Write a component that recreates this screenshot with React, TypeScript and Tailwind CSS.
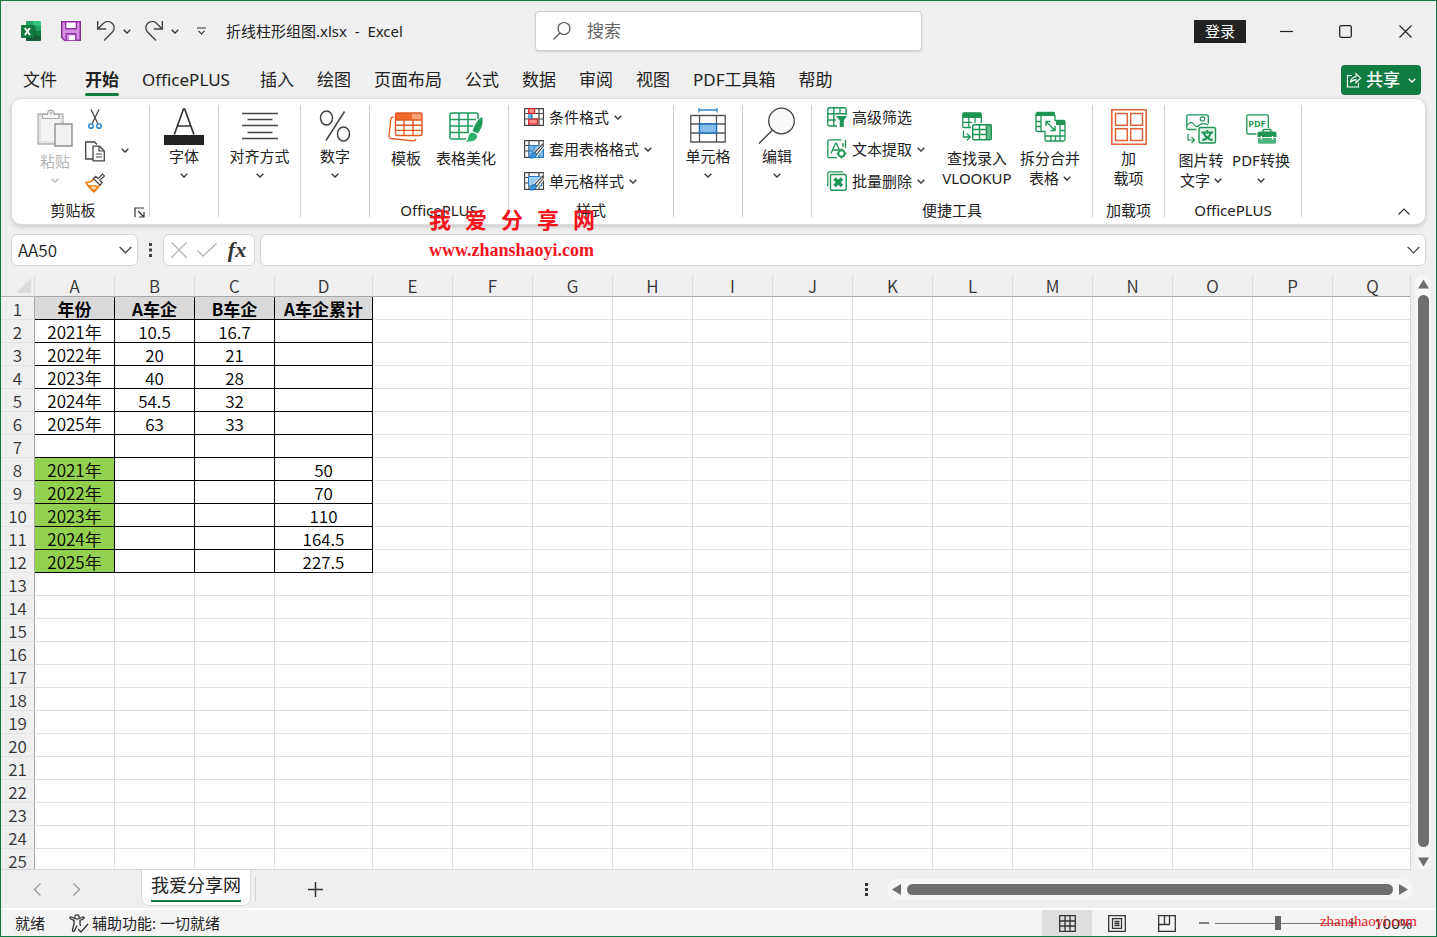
import React from "react";

type Kids = { children?: React.ReactNode };

const UI = "font-['Noto_Sans','Noto_Sans_CJK_SC',sans-serif]";
const CELL = "font-['Noto_Sans_CJK_SC',sans-serif]";

function Icon({ w, h, children, className = "" }: Kids & { w: number; h: number; className?: string }) {
  return (
    <svg width={w} height={h} viewBox={`0 0 ${w} ${h}`} fill="none" aria-hidden="true" className={`shrink-0 ${className}`}>
      {children}
    </svg>
  );
}

function Chevron({ className = "text-[#333]" }: { className?: string }) {
  return (
    <Icon w={8} h={5} className={className}>
      <path d="M.700.800 4 4 7.300.800" stroke="currentColor" strokeWidth="1.300" />
    </Icon>
  );
}

/* ---------- title bar icons ---------- */

const ExcelLogo = () => (
  <Icon w={20} h={20}>
    <path d="M6 0h7v5H5V1a1 1 0 0 1 1-1z" fill="#21a366" />
    <path d="M12 0h7a1 1 0 0 1 1 1v4h-8z" fill="#33c481" />
    <path d="M5 5h8v5H5z" fill="#107c41" />
    <path d="M12 5h8v5h-8z" fill="#21a366" />
    <path d="M5 10h8v5H5z" fill="#107c41" />
    <path d="M12 10h8v5h-8z" fill="#107c41" />
    <path d="M5 15h15v4a1 1 0 0 1-1 1H6a1 1 0 0 1-1-1z" fill="#185c37" />
    <path d="M5 4h8.500a1 1 0 0 1 1 1v12a1 1 0 0 1-1 1H5z" fill="#0b4a28" opacity=".5" />
    <rect y="4" width="13" height="13" rx="1" fill="#107c41" />
    <path d="m3.800 7 5.200 7M9 7l-5.200 7" stroke="#fff" strokeWidth="1.900" />
  </Icon>
);

const SaveIcon = () => (
  <Icon w={20} h={20}>
    <path d="M.75.75h18.500v18.500H3.500L.75 16.500z" fill="#d58fe0" stroke="#8f2da0" strokeWidth="1.500" />
    <path d="M4.700.75h10.600v7H4.700z" fill="#fff" stroke="#8f2da0" strokeWidth="1.300" />
    <path d="M5.200 19.250v-6.500h9.600v6.500" fill="#d58fe0" stroke="#8f2da0" strokeWidth="1.300" />
    <path d="M8 14.500h6v4.500H8z" fill="#fff" />
  </Icon>
);

const UndoIcon = () => (
  <Icon w={20} h={20}>
    <path d="M1.700 0v8h8.500M2 7.700 7.800 2C10.500-.2 14 .2 16.400 2.600c2.400 2.400 2.400 6 0 8.400L8 19.500" stroke="#444" strokeWidth="1.400" />
  </Icon>
);

const RedoIcon = () => (
  <Icon w={20} h={20}>
    <path d="M18.300 0v8H9.800M18 7.700 12.200 2C9.500-.2 6 .2 3.600 2.600c-2.400 2.400-2.400 6 0 8.400L12 19.500" stroke="#444" strokeWidth="1.400" />
  </Icon>
);

const SearchIcon = () => (
  <Icon w={20} h={20}>
    <circle cx="12" cy="7.500" r="6" stroke="#555" strokeWidth="1.200" />
    <path d="M7.800 12 1.500 18.500" stroke="#555" strokeWidth="1.200" />
  </Icon>
);

const ShareIcon = () => (
  <Icon w={16} h={16}>
    <path d="M6 3.500H1.500V15h11v-4" stroke="#fff" strokeWidth="1.200" />
    <path d="M4.500 10.500c.3-3.500 2.300-5.500 5.500-5.700V1.600l4.600 4.600L10 10.700V7.600c-2.500 0-4.200.8-5.500 2.900z" stroke="#fff" strokeWidth="1.100" />
  </Icon>
);

/* ---------- ribbon icons ---------- */

const PasteIcon = () => (
  <Icon w={36} h={38}>
    <path d="M1 5h25v30H1z" fill="#e3e3e3" stroke="#b4b4b4" strokeWidth="1.300" />
    <path d="M4 8h19v24H4z" fill="#f3f3f3" />
    <path d="M5.500 9.500V5.500h5C10.500-.3 17-.3 17 5.500h5v4z" fill="#fafafa" stroke="#a8a8a8" strokeWidth="1.200" />
    <circle cx="13.800" cy="4" r="1" stroke="#a8a8a8" />
    <path d="M18 15h17v22H18z" fill="#f1f1f1" stroke="#8f8f8f" strokeWidth="1.400" />
  </Icon>
);

const CutIcon = () => (
  <Icon w={14} h={20}>
    <path d="M3 .5 9.800 14.500M11 .5 4.200 14.500" stroke="#444" strokeWidth="1.300" />
    <circle cx="3" cy="17" r="2.200" stroke="#2488d0" strokeWidth="1.500" />
    <circle cx="11" cy="17" r="2.200" stroke="#2488d0" strokeWidth="1.500" />
  </Icon>
);

const CopyIcon = () => (
  <Icon w={20} h={21}>
    <path d="M8 18H.7V1h8.800l2.500 2.500" stroke="#444" strokeWidth="1.300" />
    <path d="M8 5.200h6.500l4.800 4.800v9.800H8z" fill="#fff" stroke="#444" strokeWidth="1.300" />
    <path d="M14 5.500V10h5M11 13h6M11 16h6" stroke="#444" strokeWidth="1.200" />
  </Icon>
);

const BrushIcon = () => (
  <Icon w={20} h={20}>
    <path d="M1 9.500c3 .3 5.500-1 8-3.800l6 6c-1.500 2.500-3.500 5-6 7.300C6 16.500 2.500 13 1 9.500z" fill="#fff" stroke="#e8750a" strokeWidth="1.400" />
    <path d="M4 12.500c4 .8 6.500 0 9.500 1L9 18c-2-1.500-4-3.500-5-5.500z" fill="#fbe3a6" stroke="#e8750a" strokeWidth="1.100" />
    <path d="m8.500 5.500 2.300-2.200 2.400 2.400L17.500 1l2 2-4.700 4.300 2.400 2.500-2.200 2.300z" fill="#fff" stroke="#444" strokeWidth="1.200" />
  </Icon>
);

const LauncherIcon = () => (
  <Icon w={11} h={11}>
    <path d="M1 10V1h9M4 4l5.500 5.500M10 5v5H5" stroke="#333" strokeWidth="1.200" />
  </Icon>
);

const FontIcon = () => (
  <Icon w={40} h={40}>
    <path d="M10.300 28.500 19.500 3h1.200l9.200 25.500M13.500 20h13.200" stroke="#333" strokeWidth="1.700" />
    <path d="M0 29h40v10H0z" fill="#222" />
  </Icon>
);

const AlignIcon = () => (
  <Icon w={36} h={28}>
    <path d="M0 1.500h36M5.500 7.500h25M0 13.500h36M5.500 20.500h25M0 26.500h36" stroke="#444" strokeWidth="1.300" />
  </Icon>
);

const PercentIcon = () => (
  <Icon w={32} h={32}>
    <ellipse cx="7.500" cy="8" rx="6" ry="7" stroke="#444" strokeWidth="1.500" />
    <ellipse cx="24.500" cy="24" rx="6" ry="7" stroke="#444" strokeWidth="1.500" />
    <path d="M25.500 1.500 7 30.500" stroke="#444" strokeWidth="1.500" />
  </Icon>
);

const TemplateIcon = () => (
  <Icon w={36} h={30}>
    <path d="M5.500 5C3.500 5 3 6 2.800 7.500L1 24c-.2 1.500.6 2.300 2 2.500l22 2.300c1.500.1 2.600-.4 3-2" stroke="#e0581f" strokeWidth="1.300" />
    <path d="M7.500 2.500A1.500 1.500 0 0 1 9 1h23.500A1.500 1.500 0 0 1 34 2.500V8H7.500z" fill="#f0692b" />
    <path d="M24 1h8.500A1.500 1.500 0 0 1 34 2.500V8H24z" fill="#f8a276" />
    <path d="M7.500 8H34v13.500a2 2 0 0 1-2 2H9.500a2 2 0 0 1-2-2z" fill="#fff" />
    <path d="M7.500 2.500A1.500 1.500 0 0 1 9 1h23.500A1.500 1.500 0 0 1 34 2.500v19a2 2 0 0 1-2 2H9.500a2 2 0 0 1-2-2zM7.500 8H34M7.500 13.200H34M7.500 18.400H34M16 8v15.500M25 8v15.500" stroke="#e0581f" strokeWidth="1.400" />
  </Icon>
);

const BeautifyIcon = () => (
  <Icon w={34} h={30}>
    <path d="M17 27H3a2 2 0 0 1-2-2V3a2 2 0 0 1 2-2h24a2 2 0 0 1 2 2v4M1 7.500h26M1 14h23M1 20.500h19M10 1v26M19 1v20" stroke="#1d9a59" strokeWidth="1.500" />
    <path d="M33 5c1.500 5 .3 11-4.500 16.500l-5-2.500C25.500 13 28 8 33 5z" fill="#1d9a59" />
    <path d="M23 20.500c3 .3 5.300 2 5 4.500-.5 3.500-5 4.800-11.500 4.500 3-1.500 2.500-3 3-5 .5-2.500 1.800-3.700 3.500-4z" fill="#2bb06c" />
  </Icon>
);

const GridFrame = () => <path d="M.6 1.600h18.800v16.800H.6zM.6 6.500h18.800M.6 12h18.800M5 1.600v16.800M15 1.600v16.800" stroke="#444" strokeWidth="1.200" />;

const CondFormatIcon = () => (
  <Icon w={20} h={20}>
    <GridFrame />
    <path d="M4.600 1.600h6v4.800h-6zM4.600 12.200h9v5h-9z" fill="#ff8f8f" stroke="#d42b2b" strokeWidth="1.300" />
    <path d="M4 7.500h2.500v4H4z" fill="#5fb0ea" />
    <path d="M7.500 7v5" stroke="#2273b8" strokeWidth="2" />
  </Icon>
);

const BrushOverlay = () => (
  <>
    <path d="M18.800 5.200 10.500 14l2 2 7-9z" fill="#fff" stroke="#fff" strokeWidth="3" />
    <path d="M19.300 4.500 10.800 13.300l2 2 6.500-8z" fill="#fff" stroke="#444" strokeWidth="1.100" />
    <path d="M10.600 13.500c-2.500 0-3.500 1.500-3.800 3.300-.1.900-.8 1.500-1.800 1.700 2.500 1.200 6.800.6 7.800-3z" fill="#3d95dc" stroke="#1467b0" />
  </>
);

const TableFormatIcon = () => (
  <Icon w={20} h={20}>
    <GridFrame />
    <path d="M5 6.500h14.400v11.900H5z" fill="#7db8ea" stroke="#2b7cc4" />
    <path d="M10 6.500v12M15 6.500v12M5 12h14.400" stroke="#2b7cc4" />
    <BrushOverlay />
  </Icon>
);

const CellStyleIcon = () => (
  <Icon w={20} h={20}>
    <GridFrame />
    <path d="M4.500 5.500h13v9.500h-13z" fill="#9dccf2" stroke="#2b7cc4" />
    <BrushOverlay />
  </Icon>
);

const CellsIcon = () => (
  <Icon w={36} h={36}>
    <path d="M9 2h18M9 0v4.500M27 0v4.500" stroke="#2b88d0" strokeWidth="1.300" />
    <path d="M.8 7.500h34.400V34H.8z" fill="#fff" />
    <path d="M.8 7.500h34.400V34H.8zM.8 16h34.400M.8 25h34.400M9.500 7.500V34M26.500 7.500V34" stroke="#555" strokeWidth="1.300" />
    <path d="M9.500 16h17v9h-17z" fill="#83beec" stroke="#1e74bf" strokeWidth="1.400" />
  </Icon>
);

const EditIcon = () => (
  <Icon w={38} h={38}>
    <circle cx="23.500" cy="14" r="12.800" fill="#fafafa" stroke="#444" strokeWidth="1.300" />
    <path d="M14.500 23 1 36.500" stroke="#444" strokeWidth="1.500" />
  </Icon>
);

const FilterIcon = () => (
  <Icon w={20} h={20}>
    <path d="M10 19H2.500A1.700 1.700 0 0 1 .8 17.300V2.500A1.700 1.700 0 0 1 2.500.8h15a1.700 1.700 0 0 1 1.700 1.700V8M.8 6.800h18.400M.8 13H9M6.800.8V19M13 .8V7" stroke="#1f9554" strokeWidth="1.400" />
    <path d="M9 9h11l-3.200 4.500V20h-4.100v-6.500z" fill="#1f9554" />
  </Icon>
);

const ExtractIcon = () => (
  <Icon w={20} h={20}>
    <path d="M10 18.700H2.500A1.700 1.700 0 0 1 .8 17V2.500A1.700 1.700 0 0 1 2.500.8h12M18.500 1v8M16 4v4" stroke="#1f9554" strokeWidth="1.300" />
    <path d="m4 14.500 4.500-10h1l3 7M5.500 11h6" stroke="#1f9554" strokeWidth="1.300" />
    <circle cx="14.500" cy="14.500" r="3.200" stroke="#1f9554" strokeWidth="1.900" />
    <path d="M14.500 9.500v2M14.500 17.500v2M9.500 14.500h2M17.500 14.500h2" stroke="#1f9554" strokeWidth="1.500" />
  </Icon>
);

const BatchDeleteIcon = () => (
  <Icon w={20} h={20}>
    <path d="M.8 15.500V2.500A1.700 1.700 0 0 1 2.500.8H16" stroke="#1f9554" strokeWidth="1.200" />
    <rect x="3.500" y="3.500" width="15.700" height="15.700" rx="1.500" stroke="#1f9554" strokeWidth="1.400" />
    <path d="m7.500 7.500 7.500 7.500M15 7.500 7.500 15" stroke="#1f9554" strokeWidth="3.600" />
  </Icon>
);

const LookupIcon = () => (
  <Icon w={30} h={29}>
    <path d="M.8 5V2A1.300 1.300 0 0 1 2 .8h16A1.300 1.300 0 0 1 19.300 2v3z" fill="#1f9554" />
    <path d="M9 15.500H2A1.300 1.300 0 0 1 .8 14.200V2A1.300 1.300 0 0 1 2 .8h16A1.300 1.300 0 0 1 19.300 2v9M.8 5.300h18.500M.8 10.300H10M6.800 5v10.500M13 5v6" stroke="#1f9554" strokeWidth="1.300" />
    <path d="M10.700 12.800h18.500v15H10.700z" fill="#fff" />
    <path d="M24.500 12.800h3.500a1.300 1.300 0 0 1 1.300 1.300v12.400a1.300 1.300 0 0 1-1.300 1.300h-3.500z" fill="#66bd8b" />
    <path d="M12 12.800h16a1.300 1.300 0 0 1 1.300 1.300v12.400a1.300 1.300 0 0 1-1.300 1.300H12a1.300 1.300 0 0 1-1.300-1.300V14.100a1.300 1.300 0 0 1 1.300-1.300zM10.700 17.500h14M10.700 22.500h14M17.500 12.800v15M24.500 12.800v15" stroke="#1f9554" strokeWidth="1.500" />
    <path d="M1.500 18.500v6.500H8M5 21.500 8.300 25 5 28.300" stroke="#1f9554" strokeWidth="1.300" />
  </Icon>
);

const SplitIcon = () => (
  <Icon w={31} h={31}>
    <path d="M1 5V2.200A1.400 1.400 0 0 1 2.400.8h16.200A1.400 1.400 0 0 1 20 2.200V5z" fill="#1f9554" />
    <path d="M20 4v5.500h8.500A1.500 1.500 0 0 1 30 11v17.500a1.500 1.500 0 0 1-1.500 1.500H11.500a1.500 1.500 0 0 1-1.500-1.500V20.500H2.400A1.400 1.400 0 0 1 1 19V2.200M1 10.500h5M1 15.500h5M6 5v15M10 25h20M25 19.500h5M16 25v5M20.500 25v5M25 14v16" stroke="#1f9554" strokeWidth="1.300" />
    <path d="M21 9h7.500A1.500 1.500 0 0 1 30 10.500V14h-9z" fill="#1f9554" />
    <path d="m11 10.500 9 9M11 15v-4.500h4.500M20 15v4.500h-4.500" stroke="#1f9554" strokeWidth="1.400" />
  </Icon>
);

const AddinsIcon = () => (
  <Icon w={36} h={36}>
    <path d="M.8.800h34.400v34.400H.8z" stroke="#e0643a" strokeWidth="1.600" />
    <path d="M4.500 4.500h11.800v11.800H4.500zM19.700 4.500h11.800v11.800H19.700zM4.500 19.700h11.800v11.800H4.500zM19.700 19.700h11.800v11.800H19.700z" stroke="#e0643a" strokeWidth="1.500" />
  </Icon>
);

const ImageTextIcon = () => (
  <Icon w={31} h={30}>
    <path d="M10.500 15.500H2.300A1.500 1.500 0 0 1 .8 14V2.300A1.500 1.500 0 0 1 2.300.8h18.500a1.500 1.500 0 0 1 1.500 1.500V10" stroke="#1f9554" strokeWidth="1.300" />
    <circle cx="16.500" cy="5" r="2.200" stroke="#1f9554" strokeWidth="1.200" />
    <path d="M1 11.500c3-4 5-4 7.500-.5 1.700 2.300 3 2 4.500.5 2.500-2.700 5-2.500 9-.5" stroke="#1f9554" strokeWidth="1.200" />
    <rect x="13" y="13.500" width="16.500" height="15.500" rx="1.800" fill="#e6f5ec" stroke="#1f9554" strokeWidth="1.400" />
    <path d="M15.500 18.500h11.500M21.200 16v2.500M24.800 18.500c-.8 3.800-4 6.500-8.500 7.700M17.800 18.500c.8 3.800 4 6.500 8.700 7.700" stroke="#1f9554" strokeWidth="2" />
    <path d="M2 20v6h6.500M5.500 22.800 8.500 26l-3 3" stroke="#1f9554" strokeWidth="1.200" />
  </Icon>
);

const PdfIcon = () => (
  <Icon w={31} h={30}>
    <path d="M10.500 20H2.300A1.500 1.500 0 0 1 .8 18.500V2.300A1.500 1.500 0 0 1 2.300.8h18.500a1.500 1.500 0 0 1 1.500 1.500V14" stroke="#1f9554" strokeWidth="1.300" />
    <text x="2.300" y="13" fontSize="9" fontWeight="700" fill="#1f9554" fontFamily="Open Sans, sans-serif">PDF</text>
    <path d="M17 18v-1.300a1.200 1.200 0 0 1 1.200-1.200h5.600a1.200 1.200 0 0 1 1.200 1.200V18" stroke="#1f9554" strokeWidth="1.400" />
    <path d="M13.500 17.500h15a2 2 0 0 1 2 2V23h-19v-3.500a2 2 0 0 1 2-2z" fill="#1f9554" />
    <path d="M12 24h18v4.500a1.300 1.300 0 0 1-1.300 1.300H13.300A1.300 1.300 0 0 1 12 28.500z" fill="#4db57c" />
    <path d="M15.500 22v3.500M26.500 22v3.500" stroke="#fff" strokeWidth="1.300" />
  </Icon>
);

/* ---------- ribbon parts ---------- */

function Group({ width, label, launcher, children }: Kids & { width: string; label?: string; launcher?: boolean }) {
  return (
    <section className={`flex h-28 shrink-0 flex-col border-r border-[#d1d1d1] ${width}`}>
      <div className="flex min-h-0 flex-1">{children}</div>
      <div className="flex h-3.5 items-center">
        <span className="flex-1 text-center leading-3.5">{label}</span>
        {launcher && (
          <button aria-label="剪贴板设置" className="mr-1 pt-1">
            <LauncherIcon />
          </button>
        )}
      </div>
    </section>
  );
}

function DropButton({ icon, label }: { icon: React.ReactNode; label: string }) {
  return (
    <button className="flex flex-1 flex-col items-center">
      <span className="flex h-[41px] items-center justify-center">{icon}</span>
      <span className="leading-5">{label}</span>
      <span className="flex h-[18px] items-center">
        <Chevron />
      </span>
    </button>
  );
}

function TallButton({ icon, lines, drop, width }: { icon: React.ReactNode; lines: string[]; drop?: boolean; width: string }) {
  return (
    <button className={`flex flex-col items-center whitespace-nowrap ${width}`}>
      <span className="flex h-[43px] items-center justify-center">{icon}</span>
      {lines.map((line, i) => (
        <span key={i} className="flex h-5 items-center gap-1 leading-5">
          {line}
          {drop && i === lines.length - 1 && <Chevron />}
        </span>
      ))}
    </button>
  );
}

function RowButton({ icon, label, drop }: { icon: React.ReactNode; label: string; drop?: boolean }) {
  return (
    <button className="flex h-6 items-center gap-[5px] whitespace-nowrap leading-6">
      {icon}
      {label}
      {drop && <Chevron />}
    </button>
  );
}

function Ribbon() {
  return (
    <div className="relative mx-2.5 flex rounded-[10px] border border-[#dcdcdc] bg-white pt-1.5 pb-[7px] shadow-[0_2px_4px_rgba(0,0,0,0.15)]">
      <Group width="w-[138px]" label="剪贴板" launcher>
        <button className="ml-[25px] flex flex-col items-center text-[#b5b5b5]">
          <span className="flex h-[46px] items-center">
            <PasteIcon />
          </span>
          <span className="leading-5">粘贴</span>
          <span className="flex h-[18px] items-center">
            <Chevron className="text-[#b5b5b5]" />
          </span>
        </button>
        <div className="ml-3 flex w-5 flex-col gap-2 pt-0.5">
          <button aria-label="剪切" className="flex h-6 items-center justify-center"><CutIcon /></button>
          <button aria-label="复制" className="flex h-6 items-center justify-center"><CopyIcon /></button>
          <button aria-label="格式刷" className="flex h-6 items-center justify-center"><BrushIcon /></button>
        </div>
        <button aria-label="复制选项" className="ml-4 flex h-[90px] items-center"><Chevron /></button>
      </Group>
      <Group width="w-[69px]"><DropButton icon={<FontIcon />} label="字体" /></Group>
      <Group width="w-[82px]"><DropButton icon={<AlignIcon />} label="对齐方式" /></Group>
      <Group width="w-[69px]"><DropButton icon={<PercentIcon />} label="数字" /></Group>
      <Group width="w-[139px]" label="OfficePLUS">
        <div className="flex gap-2.5 pl-4">
          <TallButton width="w-10" icon={<TemplateIcon />} lines={["模板"]} />
          <TallButton width="w-[60px]" icon={<BeautifyIcon />} lines={["表格美化"]} />
        </div>
      </Group>
      <Group width="w-[165px]" label="样式">
        <div className="flex flex-col gap-2 pl-[15px]">
          <RowButton icon={<CondFormatIcon />} label="条件格式" drop />
          <RowButton icon={<TableFormatIcon />} label="套用表格格式" drop />
          <RowButton icon={<CellStyleIcon />} label="单元格样式" drop />
        </div>
      </Group>
      <Group width="w-[69px]"><DropButton icon={<CellsIcon />} label="单元格" /></Group>
      <Group width="w-[69px]"><DropButton icon={<EditIcon />} label="编辑" /></Group>
      <Group width="w-[281px]" label="便捷工具">
        <div className="flex w-28 flex-col gap-2 pl-[15px]">
          <RowButton icon={<FilterIcon />} label="高级筛选" />
          <RowButton icon={<ExtractIcon />} label="文本提取" drop />
          <RowButton icon={<BatchDeleteIcon />} label="批量删除" drop />
        </div>
        <div className="ml-4 flex">
          <TallButton width="w-[74px]" icon={<LookupIcon />} lines={["查找录入", "VLOOKUP"]} />
          <TallButton width="w-[72px]" icon={<SplitIcon />} lines={["拆分合并", "表格"]} drop />
        </div>
      </Group>
      <Group width="w-[72px]" label="加载项">
        <TallButton width="w-full" icon={<AddinsIcon />} lines={["加", "载项"]} />
      </Group>
      <Group width="w-[137px]" label="OfficePLUS">
        <div className="flex pt-0.5 pl-1">
          <TallButton width="w-16" icon={<ImageTextIcon />} lines={["图片转", "文字"]} drop />
          <TallButton width="w-14" icon={<PdfIcon />} lines={["PDF转换", ""]} drop />
        </div>
      </Group>
      <button aria-label="折叠功能区" className="mr-[15px] ml-auto self-end pb-0.5">
        <Icon w={12} h={7}><path d="m.5 6.500 5.500-5.500 5.500 5.500" stroke="#333" strokeWidth="1.200" /></Icon>
      </button>
      <div className="pointer-events-none absolute top-[107px] left-[417px] whitespace-nowrap text-[#f5141e]">
        <p className={`flex gap-3.5 text-[22px] leading-6 font-bold ${CELL}`}>
          {["我", "爱", "分", "享", "网"].map((c) => <span key={c}>{c}</span>)}
        </p>
        <p className="pt-2 font-['Liberation_Serif',serif] text-[18px] leading-6 font-bold">www.zhanshaoyi.com</p>
      </div>
    </div>
  );
}

/* ---------- chrome ---------- */

function TitleBar() {
  return (
    <header className="flex h-[60px] items-center">
      <div className="flex w-[534px] items-center pl-5">
        <ExcelLogo />
        <button aria-label="保存" className="ml-5"><SaveIcon /></button>
        <button aria-label="撤消" className="ml-[15px]"><UndoIcon /></button>
        <button aria-label="撤消选项" className="ml-[7px]"><Chevron /></button>
        <button aria-label="恢复" className="ml-[13px]"><RedoIcon /></button>
        <button aria-label="恢复选项" className="ml-[7px]"><Chevron /></button>
        <button aria-label="自定义快速访问工具栏" className="ml-[18px]">
          <Icon w={9} h={8}><path d="M0 1h9M1.500 3.800l3 3 3-3" stroke="#333" strokeWidth="1.200" /></Icon>
        </button>
        <h1 className="ml-5 text-[15px] whitespace-pre">折线柱形组图.xlsx  -  Excel</h1>
      </div>
      <label className="flex h-10 min-w-0 flex-[0_1_387px] items-center rounded border border-[#cfcfcf] bg-white pl-4 shadow-[0_1px_2px_rgba(0,0,0,0.12)]">
        <SearchIcon />
        <input aria-label="搜索" placeholder="搜索" className="ml-[15px] w-full bg-transparent text-[17px] outline-none placeholder:text-[#666]" />
      </label>
      <div className="ml-auto flex items-center pr-6">
        <button className="h-[23px] w-[52px] bg-[#222] text-[15px] leading-[23px] text-white">登录</button>
        <button aria-label="最小化" className="ml-[34px]"><Icon w={13} h={13}><path d="M0 6.500h13" stroke="#222" strokeWidth="1.200" /></Icon></button>
        <button aria-label="最大化" className="ml-[46px]"><Icon w={13} h={13}><rect x=".7" y=".7" width="11.600" height="11.600" rx="1.500" stroke="#222" strokeWidth="1.300" /></Icon></button>
        <button aria-label="关闭" className="ml-[47px]"><Icon w={13} h={13}><path d="m.5.500 12 12M12.500.500l-12 12" stroke="#222" strokeWidth="1.200" /></Icon></button>
      </div>
    </header>
  );
}

const TABS = ["文件", "开始", "OfficePLUS", "插入", "绘图", "页面布局", "公式", "数据", "审阅", "视图", "PDF工具箱", "帮助"];

const TAB_EXTRA: Record<string, string> = {
  文件: "mr-[5px]",
  开始: "font-bold",
  OfficePLUS: "w-[95px] text-left",
};

function TabBar() {
  return (
    <nav className="flex h-[37px] items-start pr-[15px] pl-[22px] text-[17px]">
      <div className="flex gap-[23px] whitespace-nowrap">
        {TABS.map((t) => (
          <button key={t} className={`relative h-[37px] leading-[37px] ${TAB_EXTRA[t] ?? ""}`}>
            {t}
            {t === "开始" && <span className="absolute inset-x-0 bottom-0.5 h-[3px] rounded-full bg-[#107c41]" />}
          </button>
        ))}
      </div>
      <button className="mt-1 ml-auto flex h-[30px] w-20 shrink-0 items-center justify-center gap-1 rounded bg-[#107c41] font-medium text-white">
        <ShareIcon />
        共享
        <Chevron className="ml-1 text-white" />
      </button>
    </nav>
  );
}

const BOX = "flex h-8 items-center rounded-md border border-[#d4d4d4] bg-white";

function FormulaBar() {
  return (
    <div className={`mx-2.5 mt-[9px] flex items-center ${CELL}`}>
      <div className={`${BOX} w-[127px] pr-[5px] pl-1.5`}>
        <input aria-label="名称框" defaultValue="AA50" className="w-full min-w-0 bg-transparent text-[17px] font-[350] text-[#222] outline-none" />
        <button aria-label="名称列表"><Icon w={13} h={8}><path d="m.7 1 5.800 5.800L12.300 1" stroke="#444" strokeWidth="1.300" /></Icon></button>
      </div>
      <Icon w={3} h={14} className="mx-[11px]"><path d="M0 0h3v3H0zM0 5.500h3v3H0zM0 11h3v3H0z" fill="#444" /></Icon>
      <div className={`${BOX} w-[92px] justify-between px-[7px]`}>
        <button aria-label="取消"><Icon w={16} h={16}><path d="m.5.500 15 15M15.500.500l-15 15" stroke="#b5b5b5" strokeWidth="1.300" /></Icon></button>
        <button aria-label="输入"><Icon w={20} h={14}><path d="m.5 7.500 5.500 5.500L19.500.500" stroke="#b5b5b5" strokeWidth="1.300" /></Icon></button>
        <button aria-label="插入函数" className="w-5 font-['Liberation_Serif',serif] text-[22px] leading-7 text-[#333] italic font-bold">fx</button>
      </div>
      <div className={`${BOX} ml-[5px] min-w-0 flex-1 px-[5px]`}>
        <input aria-label="编辑栏" className="w-full min-w-0 bg-transparent text-[17px] outline-none" />
        <button aria-label="展开编辑栏"><Icon w={13} h={8}><path d="m.7 1 5.800 5.800L12.300 1" stroke="#444" strokeWidth="1.200" /></Icon></button>
      </div>
    </div>
  );
}

/* ---------- sheet ---------- */

const COLS = "ABCDEFGHIJKLMNOPQ".split("");

const DATA: string[][] = [
  ["年份", "A车企", "B车企", "A车企累计"],
  ["2021年", "10.5", "16.7", ""],
  ["2022年", "20", "21", ""],
  ["2023年", "40", "28", ""],
  ["2024年", "54.5", "32", ""],
  ["2025年", "63", "33", ""],
  ["", "", "", ""],
  ["2021年", "", "", "50"],
  ["2022年", "", "", "70"],
  ["2023年", "", "", "110"],
  ["2024年", "", "", "164.5"],
  ["2025年", "", "", "227.5"],
];

function cellClass(row: number, col: number) {
  if (row >= DATA.length || col > 3) return "border-[#e0e0e0] bg-white";
  if (row === 0) return "border-black bg-[#d9d9d9] font-bold";
  if (row >= 7 && col === 0) return "border-black bg-[#92d050] font-[350]";
  return "border-black bg-white font-[350]";
}

function Sheet() {
  return (
    <div className="mt-[9px] flex min-h-0 flex-1">
      <div className="min-w-0 flex-1 overflow-hidden border-r border-b border-[#d9d9d9]">
        <table className={`w-[1412px] table-fixed border-separate border-spacing-0 text-center text-[17px] ${CELL}`}>
          <colgroup>
            <col className="w-[34px]" />
            {COLS.map((c) => <col key={c} className={c === "D" ? "w-[98px]" : "w-20"} />)}
          </colgroup>
          <thead>
            <tr className="h-[22px] text-[#333]">
              <th className="border-r border-b border-[#b0b0b0] border-r-[#dcdcdc] p-0">
                <Icon w={15} h={15} className="ml-[15px]"><path d="M15 0v15H0z" fill="#dcdcdc" /></Icon>
              </th>
              {COLS.map((c) => (
                <th key={c} className="border-r border-b border-[#a6a6a6] border-r-[#dcdcdc] p-0 leading-[21px] font-[350]">{c}</th>
              ))}
            </tr>
          </thead>
          <tbody>
            {Array.from({ length: 25 }, (_, r) => (
              <tr key={r} className="h-[23px]">
                <th className="border-r border-b border-[#a6a6a6] border-b-[#e2e2e2] p-0 pt-0.5 leading-5 font-[350] text-[#333]">{r + 1}</th>
                {COLS.map((c, i) => (
                  <td key={c} className={`border-r border-b p-0 pt-0.5 leading-5 whitespace-nowrap text-black ${cellClass(r, i)}`}>
                    {DATA[r]?.[i]}
                  </td>
                ))}
              </tr>
            ))}
          </tbody>
        </table>
      </div>
      <div className="mr-[5px] ml-1 flex w-4 flex-col items-center gap-1.5 rounded-full bg-[#f6f6f6] pt-1 pb-[3px]">
        <button aria-label="向上滚动"><Icon w={11} h={10}><path d="M5.500.500 11 9.500H0z" fill="#6e6e6e" /></Icon></button>
        <div className="w-[11px] flex-1 rounded-full bg-[#6e6e6e]" />
        <button aria-label="向下滚动" className="pt-1"><Icon w={11} h={10}><path d="M0 .500h11l-5.500 9z" fill="#6e6e6e" /></Icon></button>
      </div>
    </div>
  );
}

function SheetTabs() {
  return (
    <div className="flex h-[38px] items-center">
      <button aria-label="上一张" className="ml-8"><Icon w={8} h={13}><path d="m7.500.500-6 6 6 6" stroke="#999" strokeWidth="1.300" /></Icon></button>
      <button aria-label="下一张" className="ml-8"><Icon w={8} h={13}><path d="m.5.500 6 6-6 6" stroke="#999" strokeWidth="1.300" /></Icon></button>
      <button className="ml-[60px] flex h-9 items-start self-start rounded-b-lg border border-t-0 border-[#dadada] bg-white px-[9px]">
        <span className="block border-b-2 border-[#107c41] text-[18px] leading-[30px]">我爱分享网</span>
      </button>
      <span className="ml-1 h-6 w-px bg-[#cfcfcf]" />
      <button aria-label="新工作表" className="ml-[52px]"><Icon w={15} h={15}><path d="M7.500 0v15M0 7.500h15" stroke="#333" strokeWidth="1.500" /></Icon></button>
      <div className="ml-auto flex w-[40%] max-w-[571px] items-center pr-[23px]">
        <Icon w={3} h={14}><path d="M0 1h3v3H0zM0 6h3v3H0zM0 11h3v3H0z" fill="#333" /></Icon>
        <div className="ml-[19px] flex h-[21px] flex-1 items-center gap-1.5 rounded-full bg-[#f6f6f6] px-[5px]">
          <button aria-label="向左滚动"><Icon w={9} h={11}><path d="M9 0v11L0 5.500z" fill="#6e6e6e" /></Icon></button>
          <div className="h-[11px] flex-1 rounded-full bg-[#6e6e6e]" />
          <button aria-label="向右滚动"><Icon w={9} h={11}><path d="M0 0v11l9-5.500z" fill="#6e6e6e" /></Icon></button>
        </div>
      </div>
    </div>
  );
}

function StatusBar() {
  return (
    <footer className="relative flex h-7 items-center border-t-2 border-white bg-[#f4f4f4] text-[15px]">
      <span className="ml-3.5">就绪</span>
      <button className="ml-6 flex items-center gap-[3px]">
        <Icon w={20} h={19}>
          <circle cx="8" cy="3" r="2.200" stroke="#333" strokeWidth="1.200" />
          <path d="M6 4.500 2.300 3C1 2.600.4 4.300 1.700 4.900L5 6.500v3.500L3.500 16c-.3 1.500 1.500 2 2 .6L8 11.500M10 4.500 13.700 3c1.300-.4 1.900 1.300.6 1.900L11 6.500V10l.5 2M9 15l3 3 7-8" stroke="#333" strokeWidth="1.300" />
        </Icon>
        辅助功能: 一切就绪
      </button>
      <div className="ml-auto flex h-full items-center">
        <button aria-label="普通" className="flex h-full w-[50px] items-center justify-center bg-[#dedede]">
          <Icon w={17} h={17}><path d="M.7.700h15.600v15.600H.7zM.7 6h15.600M.7 11h15.600M6 .700v15.600M11 .700v15.600" stroke="#333" strokeWidth="1.300" /></Icon>
        </button>
        <button aria-label="页面布局视图" className="flex h-full w-[50px] items-center justify-center">
          <Icon w={18} h={17}><path d="M.7.700h16.600v15.600H.7zM4.500 3.700h9v9.600h-9zM6.500 6.500h5M6.500 8.500h5M6.500 10.500h5" stroke="#333" strokeWidth="1.300" /></Icon>
        </button>
        <button aria-label="分页预览" className="flex h-full w-[50px] items-center justify-center">
          <Icon w={18} h={17}><path d="M.7.700h16.600v15.600H.7zM6.500.700v8.800M11.500.700v8.800M.7 9.500h10.800" stroke="#333" strokeWidth="1.300" /></Icon>
        </button>
        <button aria-label="缩小" className="ml-[7px]"><Icon w={10} h={10}><path d="M0 5h10" stroke="#333" strokeWidth="1.200" /></Icon></button>
        <input
          type="range"
          aria-label="缩放"
          min={0}
          max={100}
          defaultValue={50}
          className="mx-1.5 h-4 w-[126px] appearance-none bg-[linear-gradient(#777,#777)] bg-[length:100%_1px] bg-center bg-no-repeat [&::-webkit-slider-thumb]:h-3.5 [&::-webkit-slider-thumb]:w-1.5 [&::-webkit-slider-thumb]:appearance-none [&::-webkit-slider-thumb]:bg-[#666]"
        />
        <button aria-label="放大"><Icon w={10} h={10}><path d="M0 5h10M5 0v10" stroke="#333" strokeWidth="1.200" /></Icon></button>
        <span className="mr-6 ml-[17px] w-[38px]">100%</span>
      </div>
      <span className="pointer-events-none absolute top-0 right-[19px] font-['Liberation_Serif',serif] text-[15px] leading-[22px] text-[#e81c24]">zhanshaoyi.com</span>
    </footer>
  );
}

export default function App() {
  return (
    <div className={`flex h-screen flex-col overflow-hidden border border-[#107c41] bg-[#efefef] text-[15px] text-[#222] ${UI}`}>
      <TitleBar />
      <TabBar />
      <Ribbon />
      <FormulaBar />
      <Sheet />
      <SheetTabs />
      <StatusBar />
    </div>
  );
}
